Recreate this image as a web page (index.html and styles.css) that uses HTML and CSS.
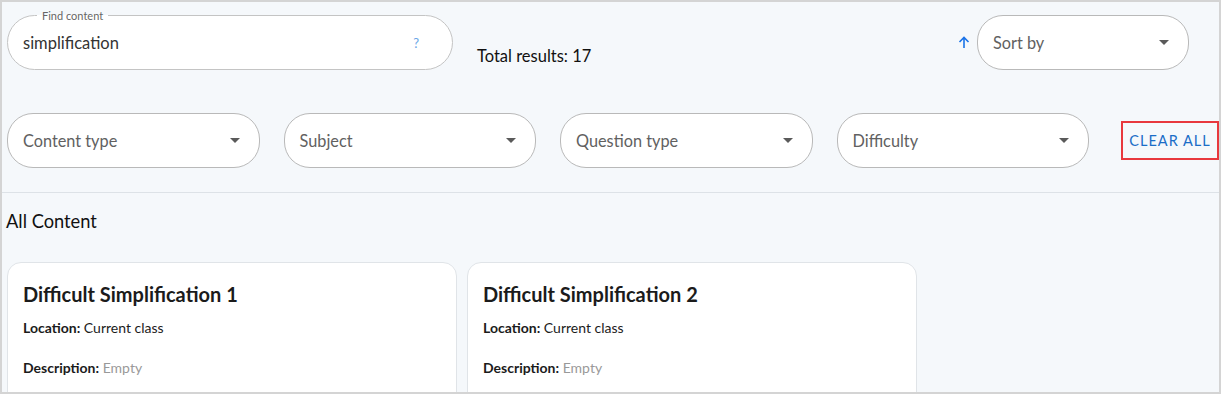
FILE: index.html
```html
<!DOCTYPE html>
<html lang="en">

<head>
  <meta charset="UTF-8">
  <meta name="viewport" content="width=device-width, initial-scale=1.0">
  <title>Content Search</title>
  <link rel="stylesheet" href="styles.css">
</head>

<body>
  <div class="page">
    <!-- Search + sort -->
    <div class="toolbar">
      <div class="search">
        <span class="search-label">Find content</span>
        <span class="search-value">simplification</span>
        <span class="search-help">?</span>
      </div>
      <div class="total">Total results: 17</div>
      <div class="spacer"></div>
      <svg class="sort-dir" width="12" height="13" viewBox="0 0 12 13">
        <path d="M6 12V1.5M1.5 6L6 1.5L10.5 6" fill="none" stroke="#1a73e8" stroke-width="1.6"/>
      </svg>
      <div class="select sort">
        <span>Sort by</span>
        <span class="caret"></span>
      </div>
    </div>

    <!-- Filters -->
    <div class="filters">
      <div class="select"><span>Content type</span><span class="caret"></span></div>
      <div class="select"><span>Subject</span><span class="caret"></span></div>
      <div class="select"><span>Question type</span><span class="caret"></span></div>
      <div class="select"><span>Difficulty</span><span class="caret"></span></div>
      <a class="clear-all" href="#">CLEAR ALL</a>
    </div>

    <div class="divider"></div>

    <!-- Results -->
    <h2 class="section-title">All Content</h2>
    <div class="cards">
      <div class="card">
        <h3 class="card-title">Difficult Simplification 1</h3>
        <p class="card-line"><b>Location:</b> Current class</p>
        <p class="card-line"><b>Description:</b> <span class="muted">Empty</span></p>
      </div>
      <div class="card">
        <h3 class="card-title">Difficult Simplification 2</h3>
        <p class="card-line"><b>Location:</b> Current class</p>
        <p class="card-line"><b>Description:</b> <span class="muted">Empty</span></p>
      </div>
    </div>
  </div>
</body>

</html>
```

FILE: styles.css
```css
body {
  margin: 0;
  font-family: 'Lato', 'Liberation Sans', sans-serif;
  color: #1b1b1b;
}

.page {
  height: 394px;
  box-sizing: border-box;
  border: 2px solid #d4d4d4;
  background: #f5f8fb;
  overflow: hidden;
}

/* Top toolbar */
.toolbar {
  display: flex;
  align-items: center;
  padding: 13px 30px 0 5px;
}

.search {
  position: relative;
  width: 446px;
  height: 55px;
  box-sizing: border-box;
  border: 1px solid #c4c4c4;
  border-radius: 28px;
  background: #fff;
  display: flex;
  align-items: center;
  padding: 0 33px 0 15px;
}

.search-label {
  position: absolute;
  top: -7px;
  left: 29px;
  padding: 0 5px;
  font-size: 11px;
  line-height: 13px;
  color: #666;
  background: linear-gradient(#f5f8fb 50%, #fff 50%);
}

.search-value {
  flex: 1;
  font-size: 16.5px;
  color: #333;
}

.search-help {
  font-size: 13px;
  color: #6aa5e6;
}

.total {
  align-self: flex-end;
  margin: 0 0 4px 24px;
  font-size: 16.5px;
  color: #111;
}

.spacer {
  flex: 1;
}

.sort-dir {
  margin-right: 7px;
}

/* Select boxes */
.select {
  width: 252.7px;
  height: 55px;
  box-sizing: border-box;
  border: 1px solid #b9b9b9;
  border-radius: 26px;
  background: #fff;
  display: flex;
  align-items: center;
  justify-content: space-between;
  padding: 0 19px 0 15px;
  font-size: 16.3px;
  color: #616161;
}

.select.sort {
  width: 212px;
}

.caret {
  width: 0;
  height: 0;
  border-left: 5px solid transparent;
  border-right: 5px solid transparent;
  border-top: 5px solid #5a5a5a;
}

/* Filters row */
.filters {
  display: flex;
  align-items: center;
  gap: 24px;
  padding: 43px 0 0 5px;
}

.clear-all {
  margin-left: 8px;
  width: 98px;
  height: 39px;
  box-sizing: border-box;
  border: 2px solid #e8383d;
  display: flex;
  align-items: center;
  justify-content: center;
  font-size: 14.5px;
  letter-spacing: 1px;
  color: #1a6dc7;
  text-decoration: none;
}

.divider {
  margin-top: 24px;
  height: 1px;
  background: #dde2e7;
}

.section-title {
  margin: 17px 0 0 4px;
  font-size: 18.3px;
  font-weight: normal;
  color: #111;
}

/* Result cards */
.cards {
  display: flex;
  gap: 10px;
  padding: 30px 0 0 5px;
}

.card {
  width: 450px;
  height: 160px;
  box-sizing: border-box;
  background: #fff;
  border: 1px solid #e0e4e8;
  border-radius: 14px;
  padding: 18px 15px;
}

.card-title {
  margin: 0;
  font-size: 20px;
  line-height: 26px;
  font-weight: bold;
  color: #1b1b1b;
}

.card-line {
  margin: 12px 0 0;
  font-size: 14px;
  line-height: 17px;
  color: #1b1b1b;
}

.card-line + .card-line {
  margin-top: 23px;
}

.muted {
  color: #999;
}
```
